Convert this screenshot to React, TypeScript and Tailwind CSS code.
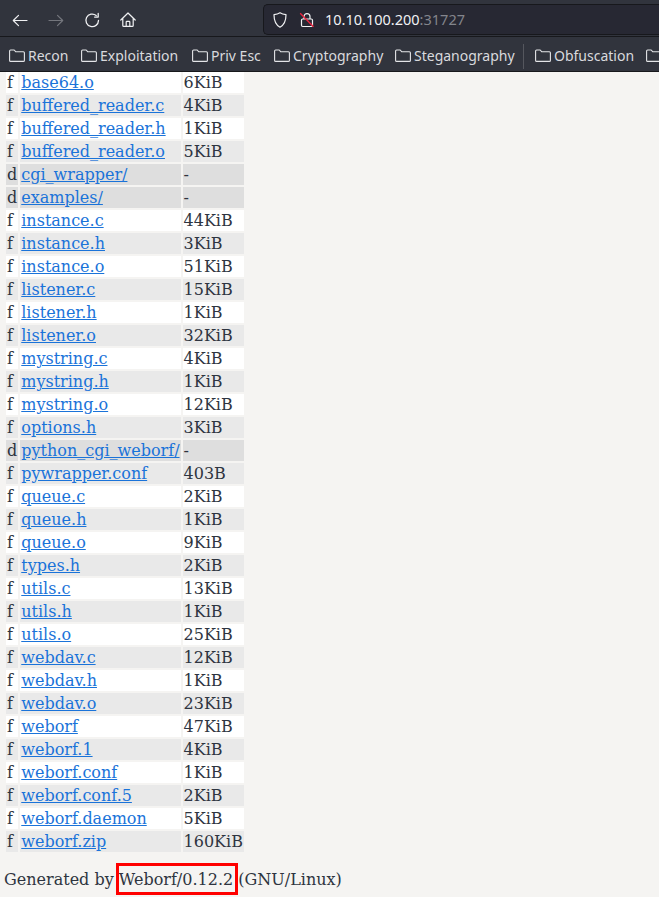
const rows: [string, string, string][] = [
  ["f", "base64.o", "6KiB"],
  ["f", "buffered_reader.c", "4KiB"],
  ["f", "buffered_reader.h", "1KiB"],
  ["f", "buffered_reader.o", "5KiB"],
  ["d", "cgi_wrapper/", "-"],
  ["d", "examples/", "-"],
  ["f", "instance.c", "44KiB"],
  ["f", "instance.h", "3KiB"],
  ["f", "instance.o", "51KiB"],
  ["f", "listener.c", "15KiB"],
  ["f", "listener.h", "1KiB"],
  ["f", "listener.o", "32KiB"],
  ["f", "mystring.c", "4KiB"],
  ["f", "mystring.h", "1KiB"],
  ["f", "mystring.o", "12KiB"],
  ["f", "options.h", "3KiB"],
  ["d", "python_cgi_weborf/", "-"],
  ["f", "pywrapper.conf", "403B"],
  ["f", "queue.c", "2KiB"],
  ["f", "queue.h", "1KiB"],
  ["f", "queue.o", "9KiB"],
  ["f", "types.h", "2KiB"],
  ["f", "utils.c", "13KiB"],
  ["f", "utils.h", "1KiB"],
  ["f", "utils.o", "25KiB"],
  ["f", "webdav.c", "12KiB"],
  ["f", "webdav.h", "1KiB"],
  ["f", "webdav.o", "23KiB"],
  ["f", "weborf", "47KiB"],
  ["f", "weborf.1", "4KiB"],
  ["f", "weborf.conf", "1KiB"],
  ["f", "weborf.conf.5", "2KiB"],
  ["f", "weborf.daemon", "5KiB"],
  ["f", "weborf.zip", "160KiB"],
];

const bookmarks: [string, string][] = [
  ["Recon", "w-[72px]"],
  ["Exploitation", "w-[111px]"],
  ["Priv Esc", "w-[82px]"],
  ["Cryptography", "w-[121px]"],
  ["Steganography", "w-[128px]"],
];

function Folder() {
  return (
    <svg width="16" height="16" viewBox="0 0 16 16" fill="none" stroke="#e4e5e8" strokeWidth="1.1" strokeLinejoin="round" className="shrink-0">
      <path d="M.6 3c0-.6.4-1 1-1h3.600l1.600 1.800h7.600c.6 0 1 .4 1 1v7.600c0 .6-.4 1-1 1H1.600c-.6 0-1-.4-1-1z" />
    </svg>
  );
}

function Bookmark({ label, className }: { label: string; className?: string }) {
  return (
    <div className={`flex items-center gap-[3px] shrink-0 ${className ?? ""}`}>
      <Folder />
      <span className="text-[14px] leading-none text-[#d9dadd] whitespace-nowrap">{label}</span>
    </div>
  );
}

export default function App() {
  return (
    <div className="h-[897px] w-[659px] overflow-hidden flex flex-col bg-[#f5f4f2]">
      <header className="h-[72px] shrink-0 bg-[#31343d] border-b border-[#17181c] font-['Noto_Sans',sans-serif]">
        <div className="h-[36px] flex items-center relative">
          <div className="flex items-center w-[263px] pl-[12px] pt-[4px] gap-[20px] h-full">
            <svg width="16" height="16" viewBox="0 0 16 16" fill="none" stroke="#f0f1f3" strokeWidth="1.2" strokeLinecap="round" strokeLinejoin="round">
              <path d="M15 8.500H1.500M6.500 3.300L1.300 8.500l5.200 5.200" />
            </svg>
            <svg width="16" height="16" viewBox="0 0 16 16" fill="none" stroke="#74767d" strokeWidth="1.2" strokeLinecap="round" strokeLinejoin="round">
              <path d="M1 8.500h13.500M9.500 3.300l5.200 5.200-5.200 5.200" />
            </svg>
            <svg width="16" height="16" viewBox="0 0 16 16" fill="none" stroke="#f0f1f3" strokeWidth="1.3" strokeLinecap="round" strokeLinejoin="round">
              <path d="M14.500 8.500A6.300 6.300 0 1 1 12.200 3.500M14.200 1.500v3.600h-3.600" />
            </svg>
            <svg width="16" height="16" viewBox="0 0 16 16" fill="none" stroke="#f0f1f3" strokeWidth="1.2" strokeLinecap="round" strokeLinejoin="round">
              <path d="M.8 8L8 1 15.200 8M2.800 6.400v7c0 .6.400 1 1 1h8.400c.6 0 1-.4 1-1v-7M6.200 14.400V10c0-.4.3-.7.7-.7h2.200c.4 0 .7.3.7.7v4.400" />
            </svg>
          </div>
          <div className="flex-1 h-[31px] mt-[3px] bg-[#272833] border border-[#17181c] border-r-0 rounded-l-[5px] flex items-center pl-[8px]">
            <svg width="16" height="16" viewBox="0 0 16 16" fill="none" stroke="#f0f1f3" strokeWidth="1.2" strokeLinejoin="round" className="shrink-0">
              <path d="M8 .8c1.800 1.200 3.600 1.700 6 1.900 0 5.400-1.500 10-6 12.500C3.500 12.700 2 8.100 2 2.700 4.400 2.500 6.200 2 8 .8z" />
            </svg>
            <svg width="16" height="16" viewBox="0 0 16 16" fill="none" className="ml-[11px] shrink-0">
              <path d="M5 7V4.600a3 3 0 0 1 6 0V7" stroke="#f0f1f3" strokeWidth="1.2" />
              <rect x="2.500" y="7" width="11" height="7.500" rx="1.200" stroke="#f0f1f3" strokeWidth="1.200" />
              <path d="M1.200 1.200L14.500 14.800" stroke="#f0233f" strokeWidth="1.300" />
            </svg>
            <span className="ml-[10px] text-[14.5px] leading-none whitespace-nowrap text-[#f0f1f3]">
              10.10.100.200<span className="text-[#83858c]">:31727</span>
            </span>
          </div>
        </div>
        <div className="h-[35px] flex items-center pl-[9px] pt-[4px] border-t border-[#17181c]">
          {bookmarks.map(([label, w]) => (
            <Bookmark key={label} label={label} className={w} />
          ))}
          <div className="w-px h-[25px] bg-[#55575e] mr-[11px] shrink-0" />
          <Bookmark label="Obfuscation" className="w-[111px]" />
          <Folder />
        </div>
      </header>
      <main className="flex-1 overflow-hidden font-['DejaVu_Serif',serif] text-[16px] text-[#2e3440]">
        <table className="border-separate border-spacing-[2px] ml-[4px] -mt-[2px]">
          <tbody>
            {rows.map(([kind, name, size], i) => {
              const bg = kind === "d" ? "bg-[#dedede]" : i % 2 === 0 ? "bg-white" : "bg-[#e9e9e9]";
              return (
                <tr key={name} className={bg}>
                  <td className="p-px leading-[19px]">{kind}</td>
                  <td className="p-px leading-[19px]">
                    <a href="#" className="text-[#1a73d9] underline">{name}</a>
                  </td>
                  <td className="p-px leading-[19px]">{size}</td>
                </tr>
              );
            })}
          </tbody>
        </table>
        <p className="ml-[4px] mt-[16px] leading-[19px] whitespace-nowrap">
          Generated by{" "}
          <span className="relative">
            Weborf/0.12.2
            <span className="absolute -left-[3px] -right-[5px] -top-[7px] -bottom-[6px] border-[3px] border-[#ff0000]" />
          </span>{" "}
          (GNU/Linux)
        </p>
      </main>
    </div>
  );
}
